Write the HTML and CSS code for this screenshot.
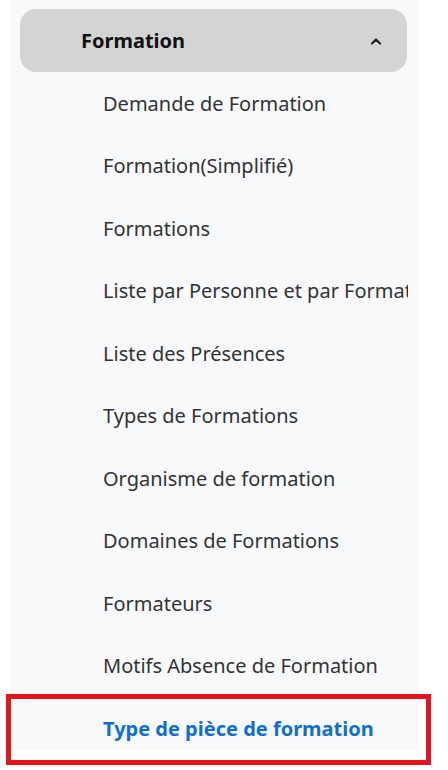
FILE: index.html
```html
<!DOCTYPE html>
<html lang="fr">
<head>
    <meta charset="UTF-8">
    <meta name="viewport" content="width=device-width, initial-scale=1.0">
    <title>Formation</title>
    <link rel="stylesheet" href="styles.css">
</head>
<body>

    <!-- Sidebar: Formation group -->
    <nav class="sidebar">
        <div class="group-header">
            <span class="group-title">Formation</span>
            <svg class="chevron" width="12" height="8" viewBox="0 0 12 8">
                <polyline points="2,6.5 6,2.5 10,6.5" fill="none" stroke="#222" stroke-width="2.2" stroke-linecap="round" stroke-linejoin="round"/>
            </svg>
        </div>

        <ul class="menu">
            <li class="menu-item"><span class="label">Demande de Formation</span></li>
            <li class="menu-item"><span class="label">Formation(Simplifié)</span></li>
            <li class="menu-item"><span class="label">Formations</span></li>
            <li class="menu-item"><span class="label">Liste par Personne et par Formation</span></li>
            <li class="menu-item"><span class="label">Liste des Présences</span></li>
            <li class="menu-item"><span class="label">Types de Formations</span></li>
            <li class="menu-item"><span class="label">Organisme de formation</span></li>
            <li class="menu-item"><span class="label">Domaines de Formations</span></li>
            <li class="menu-item"><span class="label">Formateurs</span></li>
            <li class="menu-item"><span class="label">Motifs Absence de Formation</span></li>
            <li class="menu-item active highlighted"><span class="label">Type de pièce de formation</span></li>
        </ul>
    </nav>

</body>
</html>
```

FILE: styles.css
```css
html, body {
    height: 100%;
}

body {
    margin: 0;
    background: #ffffff;
    font-family: "Noto Sans", "Open Sans", Arial, sans-serif;
    color: #333333;
}

/* Sidebar panel */
.sidebar {
    margin-left: 11px;
    width: 408px;
    height: 750px;
    padding-top: 9px;
    box-sizing: border-box;
    background: #f8f9fb;
}

/* Group header (collapsible) */
.group-header {
    display: flex;
    align-items: center;
    justify-content: space-between;
    height: 63px;
    margin: 0 12px 0 9px;
    padding: 0 25px 0 61px;
    background: #d4d4d4;
    border-radius: 16px;
}

.group-title {
    font-size: 20px;
    font-weight: bold;
    color: #111111;
}

.chevron {
    display: block;
}

/* Sub menu */
.menu {
    list-style: none;
    margin: 0;
    padding: 0;
}

.menu-item {
    position: relative;
    display: flex;
    align-items: center;
    height: 62.5px;
    padding: 0 11px 0 92px;
    font-size: 20px;
}

.menu-item .label {
    min-width: 0;
    white-space: nowrap;
    overflow: hidden;
}

.menu-item.active {
    color: #0f6fcf;
    font-weight: bold;
}

/* Red highlight frame around the selected entry */
.menu-item.highlighted::after {
    content: "";
    position: absolute;
    left: -5px;
    right: -12px;
    top: -3px;
    bottom: -5px;
    border: 5px solid #e3141b;
}
```
